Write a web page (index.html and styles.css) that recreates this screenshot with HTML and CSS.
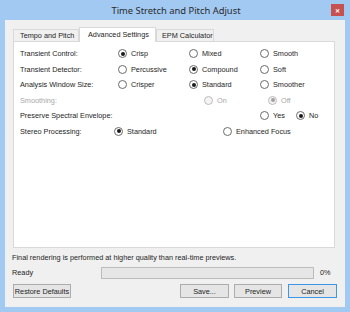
FILE: index.html
```html
<!DOCTYPE html>
<html lang="en">
<head>
  <meta charset="UTF-8" />
  <title>Time Stretch and Pitch Adjust</title>
  <link rel="stylesheet" href="styles.css">
</head>
<body>
  <div class="window">
    <div class="titlebar">
      <span class="title">Time Stretch and Pitch Adjust</span>
      <span class="close">&#x2715;</span>
    </div>

    <div class="client">
      <div class="tabs">
        <div class="tab">Tempo and Pitch</div>
        <div class="tab active">Advanced Settings</div>
        <div class="tab last">EPM Calculator</div>
      </div>

      <div class="pane">
        <div class="row cols3">
          <span class="label">Transient Control:</span>
          <span class="opt"><i class="radio on"></i>Crisp</span>
          <span class="opt"><i class="radio"></i>Mixed</span>
          <span class="opt"><i class="radio"></i>Smooth</span>
        </div>
        <div class="row cols3">
          <span class="label">Transient Detector:</span>
          <span class="opt"><i class="radio"></i>Percussive</span>
          <span class="opt"><i class="radio on"></i>Compound</span>
          <span class="opt"><i class="radio"></i>Soft</span>
        </div>
        <div class="row cols3">
          <span class="label">Analysis Window Size:</span>
          <span class="opt"><i class="radio"></i>Crisper</span>
          <span class="opt"><i class="radio on"></i>Standard</span>
          <span class="opt"><i class="radio"></i>Smoother</span>
        </div>
        <div class="row smoothing disabled">
          <span class="label">Smoothing:</span>
          <span class="opt"><i class="radio"></i>On</span>
          <span class="opt"><i class="radio on"></i>Off</span>
        </div>
        <div class="row envelope">
          <span class="label">Preserve Spectral Envelope:</span>
          <span class="opt"><i class="radio"></i>Yes</span>
          <span class="opt"><i class="radio on"></i>No</span>
        </div>
        <div class="row stereo">
          <span class="label">Stereo Processing:</span>
          <span class="opt"><i class="radio on"></i>Standard</span>
          <span class="opt"><i class="radio"></i>Enhanced Focus</span>
        </div>
      </div>

      <p class="note">Final rendering is performed at higher quality than real-time previews.</p>

      <div class="status">
        <span class="ready">Ready</span>
        <div class="progress"></div>
        <span class="percent">0%</span>
      </div>

      <div class="buttons">
        <button class="btn restore">Restore Defaults</button>
        <button class="btn save">Save...</button>
        <button class="btn preview">Preview</button>
        <button class="btn cancel">Cancel</button>
      </div>
    </div>
  </div>
</body>
</html>
```

FILE: styles.css
```css
* {
  box-sizing: border-box;
}

body {
  margin: 0;
  width: 350px;
  height: 312px;
  overflow: hidden;
  font-family: "Liberation Sans", Arial, sans-serif;
  font-size: 7.3px;
  color: #1e1e1e;
}

.window {
  width: 350px;
  height: 312px;
  background: #a2c9f2;
  padding: 0 5px 5px 5px;
  display: flex;
  flex-direction: column;
}

.titlebar {
  height: 20px;
  display: flex;
  align-items: center;
  justify-content: center;
  position: relative;
}

.title {
  font-family: "Noto Sans", sans-serif;
  font-size: 9.4px;
  color: #2a2a2a;
  margin-left: 2px;
}

.close {
  position: absolute;
  right: 1px;
  top: 4px;
  width: 13px;
  height: 12px;
  background: #c75050;
  color: #fff;
  font-size: 6px;
  font-weight: bold;
  display: flex;
  align-items: center;
  justify-content: center;
}

.client {
  flex: 1;
  background: #f0f0f0;
  padding: 7px 10px 0 8px;
  display: flex;
  flex-direction: column;
}

.tabs {
  display: flex;
  align-items: flex-end;
  height: 14px;
  position: relative;
  z-index: 1;
}

.tab {
  height: 12px;
  padding: 0 0 0 6px;
  border: 1px solid #d9d9d9;
  border-bottom: none;
  background: #f0f0f0;
  display: flex;
  align-items: center;
  width: 66px;
  white-space: nowrap;
}

.tab.active {
  height: 15px;
  width: 77px;
  background: #fff;
  border-color: #d9d9d9;
  margin-bottom: -1px;
  padding-left: 8px;
  padding-bottom: 2px;
}

.tab.last {
  width: 58px;
  padding-left: 5px;
}

.pane {
  height: 207px;
  background: #fff;
  border: 1px solid #d9d9d9;
  padding: 4px 0 0 6px;
}

.row {
  display: flex;
  align-items: center;
  height: 15.5px;
  white-space: nowrap;
}

.label {
  width: 98px;
}

.opt {
  display: flex;
  align-items: center;
}

.cols3 .opt {
  width: 71px;
}

.smoothing .label {
  width: 184px;
}

.smoothing .opt {
  width: 64px;
}

.envelope .label {
  width: 240px;
}

.envelope .opt {
  width: 36px;
}

.stereo .label {
  width: 94px;
}

.stereo .opt {
  width: 109px;
}

.radio {
  width: 9px;
  height: 9px;
  border: 1px solid #6b6b6b;
  border-radius: 50%;
  background: #fff;
  margin-right: 4px;
  display: flex;
  align-items: center;
  justify-content: center;
}

.radio.on::after {
  content: "";
  width: 4px;
  height: 4px;
  border-radius: 50%;
  background: #1a1a1a;
}

.disabled {
  color: #a8a8a8;
}

.disabled .radio {
  border-color: #bcbcbc;
  background: #f4f4f4;
}

.disabled .radio.on::after {
  background: #a0a0a0;
}

.note {
  margin: 4px 0 0 -1px;
  height: 11px;
  line-height: 11px;
}

.status {
  display: flex;
  align-items: center;
  height: 13px;
  margin-top: 3px;
  margin-left: -1px;
}

.ready {
  width: 89px;
}

.progress {
  width: 213px;
  height: 12px;
  background: #e6e6e6;
  border: 1px solid #bcbcbc;
}

.percent {
  margin-left: 6px;
}

.buttons {
  display: flex;
  margin-top: 5px;
}

.btn {
  height: 14px;
  padding: 0;
  font: inherit;
  color: #1e1e1e;
  background: #e5e5e5;
  border: 1px solid #acacac;
}

.restore {
  width: 58px;
}

.save {
  width: 49px;
  margin-left: auto;
}

.preview {
  width: 48px;
  margin-left: 5px;
}

.cancel {
  width: 49px;
  margin-left: 6px;
  margin-right: -2px;
  border-color: #3c97e8;
}
```
